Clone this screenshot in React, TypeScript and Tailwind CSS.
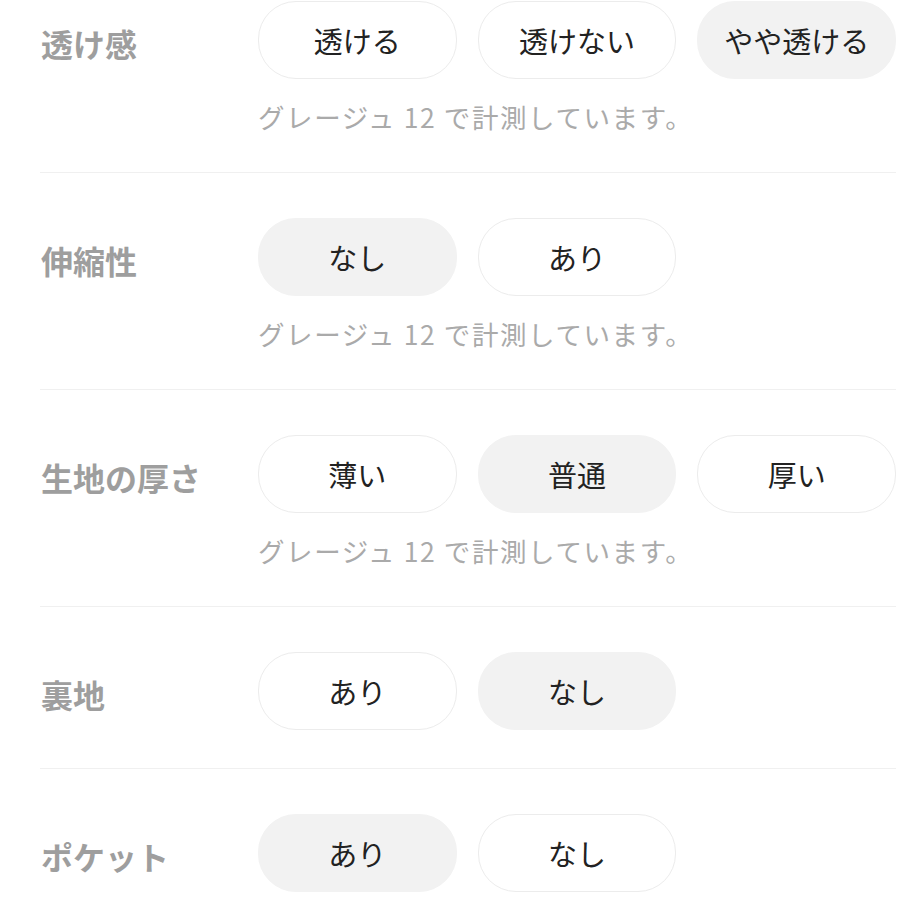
import React from 'react';

interface Attribute {
  label: string;
  options: string[];
  selected: number;
  note?: string;
}

const attributes: Attribute[] = [
  { label: '透け感', options: ['透ける', '透けない', 'やや透ける'], selected: 2, note: 'グレージュ 12 で計測しています。' },
  { label: '伸縮性', options: ['なし', 'あり'], selected: 0, note: 'グレージュ 12 で計測しています。' },
  { label: '生地の厚さ', options: ['薄い', '普通', '厚い'], selected: 1, note: 'グレージュ 12 で計測しています。' },
  { label: '裏地', options: ['あり', 'なし'], selected: 1 },
  { label: 'ポケット', options: ['あり', 'なし'], selected: 0 },
];

const font = { fontFamily: '"Noto Sans CJK JP", "Noto Sans", sans-serif' };

function OptionButton({ text, active }: { text: string; active: boolean }) {
  return (
    <button
      type="button"
      className={`h-[78px] rounded-[38px] border-[1.5px] text-[29px] leading-none text-[#222] ${
        active ? 'bg-[#f2f2f2] border-[#f2f2f2]' : 'bg-white border-[#ececec]'
      }`}
    >
      {text}
    </button>
  );
}

function AttributeRow({ item, first, last }: { item: Attribute; first: boolean; last: boolean }) {
  return (
    <div
      className={`flex ${first ? 'pt-[1px]' : 'pt-[45px]'} ${
        last ? 'pb-[10px]' : 'pb-[38px] border-b border-[#f0f0f0]'
      }`}
    >
      <div className="w-[218px] h-[78px] shrink-0 flex items-center pl-[1px] pt-[6px]">
        <span className="text-[32px] font-bold text-[#9e9e9e] leading-none">{item.label}</span>
      </div>
      <div className="flex-1 flex flex-col">
        <div className="grid grid-cols-3 gap-x-[21px]">
          {item.options.map((o, i) => (
            <OptionButton key={o} text={o} active={i === item.selected} />
          ))}
        </div>
        {item.note && (
          <p className="mt-[21px] text-[26.5px] tracking-[1.6px] leading-[34px] text-[#aaaaaa]">{item.note}</p>
        )}
      </div>
    </div>
  );
}

export default function App() {
  return (
    <div className="w-[900px] h-[900px] overflow-hidden bg-white pl-[40px] pr-[4px]" style={font}>
      {attributes.map((a, i) => (
        <AttributeRow key={a.label} item={a} first={i === 0} last={i === attributes.length - 1} />
      ))}
    </div>
  );
}
